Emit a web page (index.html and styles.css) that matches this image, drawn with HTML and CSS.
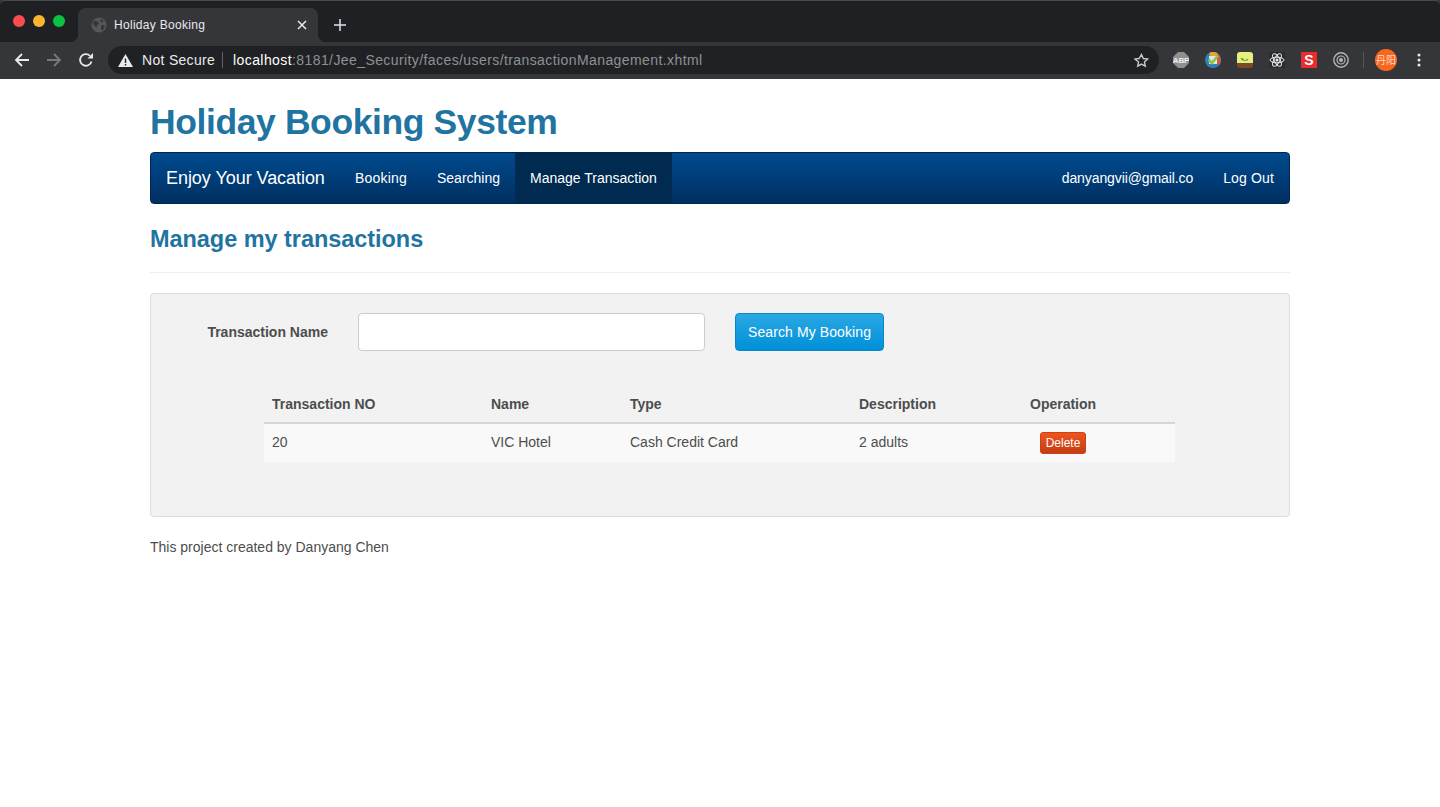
FILE: index.html
```html
<!DOCTYPE html>
<html lang="en">
<head>
  <meta charset="UTF-8">
  <title>Holiday Booking</title>
  <link rel="stylesheet" href="styles.css">
</head>
<body>
  <div class="chrome">
    <div class="tabstrip">
      <div class="lights">
        <span class="light red"></span>
        <span class="light yellow"></span>
        <span class="light green"></span>
      </div>
      <div class="tab">
        <svg class="favicon" width="16" height="16" viewBox="0 0 16 16"><circle cx="8" cy="8" r="7.5" fill="#55575b"/><path d="M3 3.500l3.500 1 1.500 2-2 1.500-.5 3-2-2.500-1.500-2zM10 2l2.500 2-1.500 1.500-2-1zM10.500 8l3.500.5-1.500 4-2 1-.5-2.500z" fill="#35363a"/></svg>
        <span class="tab-title">Holiday Booking</span>
        <svg class="tab-close" width="10" height="10" viewBox="0 0 10 10"><path d="M1 1l8 8M9 1l-8 8" stroke="#e8eaed" stroke-width="1.500"/></svg>
      </div>
      <svg class="new-tab" width="12" height="12" viewBox="0 0 12 12"><path d="M6 0v12M0 6h12" stroke="#dee1e6" stroke-width="1.500"/></svg>
    </div>
    <div class="toolbar">
      <svg class="nav-icon first" width="16" height="16" viewBox="0 0 16 16"><path d="M15 8H2M8 2L2 8l6 6" fill="none" stroke="#e8eaed" stroke-width="1.800"/></svg>
      <svg class="nav-icon" width="16" height="16" viewBox="0 0 16 16"><path d="M1 8h13M8 2l6 6-6 6" fill="none" stroke="#77797c" stroke-width="1.800"/></svg>
      <svg class="nav-icon" width="16" height="16" viewBox="0 0 16 16"><path d="M13.500 9.500A5.800 5.800 0 1 1 12 3.800" fill="none" stroke="#e8eaed" stroke-width="1.800"/><path d="M9.500 6.500H15V1z" fill="#e8eaed"/></svg>
      <div class="omnibox">
        <svg class="warn" width="15" height="13" viewBox="0 0 15 13"><path d="M7.500 0L15 13H0z" fill="#e8eaed"/><path d="M6.800 4.500h1.400v4.500H6.800zM6.800 10h1.400v1.400H6.800z" fill="#202124"/></svg>
        <span class="not-secure">Not Secure</span>
        <span class="divider"></span>
        <span class="url"><b>localhost</b>:8181/Jee_Security/faces/users/transactionManagement.xhtml</span>
        <svg class="star" width="15" height="15" viewBox="0 0 24 24"><path d="M12 2.500l2.900 6.300 6.900.8-5.100 4.700 1.400 6.800-6.100-3.400-6.100 3.400 1.400-6.800L1.200 9.600l6.900-.8z" fill="none" stroke="#c8cacd" stroke-width="2.200"/></svg>
      </div>
      <div class="extensions">
        <svg width="16" height="16" viewBox="0 0 16 16"><path d="M5 0h6l5 5v6l-5 5H5l-5-5V5z" fill="#8f8f8f"/><text x="8" y="11" class="abp">ABP</text></svg>
        <svg width="16" height="16" viewBox="0 0 16 16"><circle cx="8" cy="8" r="8" fill="#2f7fbe"/><path d="M4 1.100A8 8 0 0 1 13 1.800L10 6H6z" fill="#e8a33a"/><path d="M13 1.800A8 8 0 0 1 16 8a8 8 0 0 1-2 5.300L11 9z" fill="#d9573c"/><path d="M4 4h8v8H4z" fill="#dbe8ee"/><path d="M3.500 7.500L7 11l6-7.500" fill="none" stroke="#8ec63f" stroke-width="2.600"/></svg>
        <svg width="16" height="16" viewBox="0 0 16 16"><path d="M3 0h10a3 3 0 0 1 3 3v8H0V3a3 3 0 0 1 3-3z" fill="#e6ee82"/><path d="M0 11h16v2a3 3 0 0 1-3 3H3a3 3 0 0 1-3-3z" fill="#7a4a22"/><path d="M8 9C7 6.500 5 6 3.500 6 4 8 6 9 8 9zM8 9c.5-1.500 2-2 3.500-2-.5 1.500-2 2-3.500 2z" fill="#5f9a2c"/></svg>
        <svg width="16" height="16" viewBox="0 0 16 16"><rect width="16" height="16" fill="#2b2c30"/><g fill="none" stroke="#e8eaed" stroke-width="1"><ellipse cx="8" cy="8" rx="7" ry="2.800"/><ellipse cx="8" cy="8" rx="7" ry="2.800" transform="rotate(60 8 8)"/><ellipse cx="8" cy="8" rx="7" ry="2.800" transform="rotate(120 8 8)"/></g><circle cx="8" cy="8" r="1.500" fill="#e8eaed"/></svg>
        <div class="ext-s">S</div>
        <svg width="16" height="16" viewBox="0 0 16 16"><g fill="none" stroke="#b4b5b7"><circle cx="8" cy="8" r="7.200" stroke-width="1.400"/><circle cx="8" cy="8" r="4" stroke-width="1.200"/></g><circle cx="8" cy="8" r="2" fill="#b4b5b7"/></svg>
      </div>
      <span class="ext-divider"></span>
      <div class="avatar">丹阳</div>
      <svg class="menu" width="4" height="14" viewBox="0 0 4 14"><circle cx="2" cy="2" r="1.500" fill="#e8eaed"/><circle cx="2" cy="7" r="1.500" fill="#e8eaed"/><circle cx="2" cy="12" r="1.500" fill="#e8eaed"/></svg>
    </div>
  </div>

  <div class="container">
    <h1>Holiday Booking System</h1>

    <nav class="navbar">
      <a class="brand" href="#">Enjoy Your Vacation</a>
      <ul class="nav">
        <li class="nav-booking"><a href="#">Booking</a></li>
        <li><a href="#">Searching</a></li>
        <li class="active"><a href="#">Manage Transaction</a></li>
      </ul>
      <ul class="nav nav-right">
        <li class="nav-user"><a href="#">danyangvii@gmail.co</a></li>
        <li class="nav-logout"><a href="#">Log Out</a></li>
      </ul>
    </nav>

    <div class="page-header">
      <h2>Manage my transactions</h2>
    </div>

    <div class="well">
      <form class="search-form">
        <label for="transactionName">Transaction Name</label>
        <input id="transactionName" type="text">
        <button class="btn btn-primary" type="button">Search My Booking</button>
      </form>

      <table class="table">
        <thead>
          <tr>
            <th class="col-no">Transaction NO</th>
            <th class="col-name">Name</th>
            <th class="col-type">Type</th>
            <th class="col-desc">Description</th>
            <th>Operation</th>
          </tr>
        </thead>
        <tbody>
          <tr>
            <td>20</td>
            <td>VIC Hotel</td>
            <td>Cash Credit Card</td>
            <td>2 adults</td>
            <td><button class="btn-delete" type="button">Delete</button></td>
          </tr>
        </tbody>
      </table>
    </div>

    <p class="footer">This project created by Danyang Chen</p>
  </div>
</body>
</html>
```

FILE: styles.css
```css
* {
  box-sizing: border-box;
}
body {
  margin: 0;
  background: #fff;
  color: #4d4d4d;
  font-family: "Liberation Sans", Arial, sans-serif;
  font-size: 14px;
  line-height: 20px;
}

/* browser window */
.chrome {
  height: 79px;
  background: #35363a;
}
.tabstrip {
  display: flex;
  align-items: flex-end;
  height: 42px;
  background: #1f2023;
  border-top: 1px solid #4a4b4e;
  border-radius: 5px 5px 0 0;
}
.lights {
  display: flex;
  gap: 8px;
  align-self: flex-start;
  padding: 14px 0 0 13px;
  width: 78px;
}
.light {
  width: 12px;
  height: 12px;
  border-radius: 50%;
}
.red { background: #fc4c4c; }
.yellow { background: #fdb52e; }
.green { background: #0cc13f; }
.tab {
  position: relative;
  display: flex;
  align-items: center;
  width: 240px;
  height: 34px;
  padding: 0 11px 0 13px;
  background: #35363a;
  border-radius: 8px 8px 0 0;
}
.tab::before,
.tab::after {
  content: "";
  position: absolute;
  bottom: 0;
  width: 8px;
  height: 8px;
}
.tab::before {
  left: -8px;
  background: radial-gradient(circle at 0 0, transparent 8px, #35363a 8.5px);
}
.tab::after {
  right: -8px;
  background: radial-gradient(circle at 100% 0, transparent 8px, #35363a 8.5px);
}
.favicon {
  margin-right: 7px;
}
.tab-title {
  flex: 1;
  color: #e8eaed;
  font-size: 12px;
  letter-spacing: .3px;
  white-space: nowrap;
}
.new-tab {
  margin: 0 0 11px 16px;
}
.toolbar {
  display: flex;
  align-items: center;
  height: 37px;
  padding-bottom: 1px;
}
.nav-icon {
  margin-left: 16px;
}
.nav-icon.first {
  margin-left: 14px;
}
.omnibox {
  display: flex;
  align-items: center;
  width: 1051px;
  height: 28px;
  margin-left: 14px;
  padding: 0 10px;
  background: #202124;
  border-radius: 14px;
  font-size: 14px;
}
.warn {
  margin-right: 9px;
}
.not-secure {
  color: #e8eaed;
  letter-spacing: .3px;
}
.divider {
  width: 1px;
  height: 16px;
  margin: 0 10px 0 7px;
  background: #5f6368;
}
.url {
  flex: 1;
  color: #8d9196;
  letter-spacing: .41px;
  white-space: nowrap;
}
.url b {
  color: #fff;
  font-weight: 400;
}
.extensions {
  display: flex;
  align-items: center;
  gap: 16px;
  margin-left: 14px;
}
.abp {
  fill: #f2f2f2;
  font-size: 8px;
  font-weight: 700;
  text-anchor: middle;
  letter-spacing: -.2px;
}
.ext-s {
  width: 16px;
  height: 16px;
  background: #ea2c2c;
  color: #fff;
  font-size: 14px;
  font-weight: 700;
  line-height: 16px;
  text-align: center;
}
.ext-divider {
  width: 1px;
  height: 16px;
  margin: 0 11px 0 14px;
  background: #55565a;
}
.avatar {
  width: 22px;
  height: 22px;
  border-radius: 50%;
  background: #f9661e;
  color: #fbd9c6;
  font-family: "Noto Sans CJK SC", sans-serif;
  font-size: 10px;
  line-height: 22px;
  text-align: center;
  white-space: nowrap;
}
.menu {
  margin-left: 20px;
}

/* page */
.container {
  width: 1140px;
  margin: 0 auto;
}
h1 {
  margin: 21px 0 8px;
  color: #1f74a2;
  font-size: 35.500px;
  font-weight: 700;
  letter-spacing: -.4px;
  line-height: 44px;
}
.navbar {
  display: flex;
  height: 52px;
  background: linear-gradient(#004b8f, #002f61);
  border: 1px solid #00264d;
  border-radius: 4px;
}
.brand {
  width: 189px;
  padding-left: 15px;
  color: #fff;
  font-size: 18px;
  letter-spacing: -.05px;
  line-height: 50px;
  text-decoration: none;
  white-space: nowrap;
}
.nav {
  display: flex;
  margin: 0;
  padding: 0;
  list-style: none;
}
.nav-right {
  margin-left: auto;
}
.nav a {
  display: block;
  padding: 0 15px;
  color: #fff;
  line-height: 50px;
  text-decoration: none;
}
.nav-booking a {
  letter-spacing: .2px;
}
.nav-user a {
  letter-spacing: -.1px;
}
.nav-logout a {
  letter-spacing: .15px;
}
.nav .active a {
  background: #002a50;
}
.page-header {
  margin-top: 20px;
  padding-bottom: 18px;
  border-bottom: 1px solid #eee;
}
h2 {
  margin: 0;
  color: #1f74a2;
  font-size: 23.500px;
  font-weight: 700;
  letter-spacing: -.05px;
  line-height: 30px;
}
.well {
  height: 224px;
  margin-top: 20px;
  padding: 19px 0 0;
  background: #f2f2f2;
  border: 1px solid #ddd;
  border-radius: 4px;
}
.search-form {
  display: flex;
  align-items: center;
}
.search-form label {
  width: 177px;
  font-weight: 700;
  text-align: right;
}
.search-form input {
  width: 347px;
  height: 38px;
  margin-left: 30px;
  background: #fff;
  border: 1px solid #ccc;
  border-radius: 4px;
}
.btn {
  width: 149px;
  height: 38px;
  margin-left: 30px;
  padding: 0;
  border-radius: 4px;
  color: #fff;
  font-family: inherit;
  font-size: 14px;
  letter-spacing: .1px;
}
.btn-primary {
  background: linear-gradient(#2aa8e3, #0090d9);
  border: 1px solid #0a86c6;
}
.table {
  width: 911px;
  margin: 33px 0 0 113px;
  border-collapse: collapse;
  table-layout: fixed;
}
.table th {
  height: 39px;
  padding: 2px 8px 0;
  border-bottom: 2px solid #d6d6d6;
  text-align: left;
}
.table td {
  height: 39px;
  padding: 0 8px 2px;
  background: #f9f9f9;
}
.col-no { width: 219px; }
.col-name { width: 139px; }
.col-type { width: 229px; }
.col-desc { width: 171px; }
.btn-delete {
  display: block;
  width: 46px;
  height: 22px;
  margin: 2px 0 0 10px;
  padding: 0;
  background: linear-gradient(#f0541e, #c63e14);
  border: 1px solid #c8421a;
  border-radius: 3px;
  color: #fff;
  font-family: inherit;
  font-size: 12px;
}
.footer {
  margin: 20px 0 0;
}
```
